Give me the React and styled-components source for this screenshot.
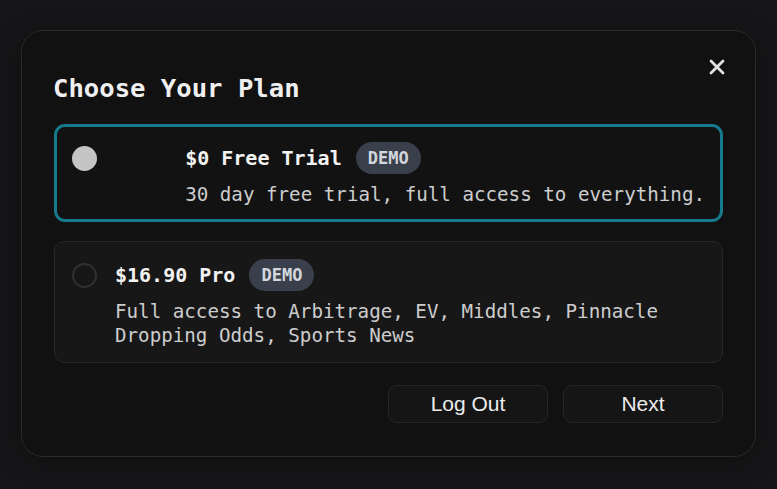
import styled, { createGlobalStyle } from "styled-components";
import { useState } from "react";

const plans = [
  {
    id: "trial",
    title: "$0 Free Trial",
    description: "30 day free trial, full access to everything.",
  },
  {
    id: "pro",
    title: "$16.90 Pro",
    description:
      "Full access to Arbitrage, EV, Middles, Pinnacle Dropping Odds, Sports News",
  },
];

const App = () => {
  const [selected, setSelected] = useState("trial");

  return (
    <>
      <GlobalStyle />
      <Overlay>
        <Modal>
          <Close aria-label="Close">
            <svg width="16" height="16" viewBox="0 0 16 16">
              <path
                d="M2 2 L14 14 M14 2 L2 14"
                stroke="currentColor"
                strokeWidth="2.8"
                strokeLinecap="round"
              />
            </svg>
          </Close>
          <Title>Choose Your Plan</Title>
          <PlanList>
            {plans.map((plan) => {
              const active = plan.id === selected;
              return (
                <PlanCard
                  key={plan.id}
                  $active={active}
                  onClick={() => setSelected(plan.id)}
                >
                  <Radio $active={active} />
                  <PlanText>
                    <PlanHeader>
                      <PlanName>{plan.title}</PlanName>
                      <Badge>DEMO</Badge>
                    </PlanHeader>
                    <PlanDescription>{plan.description}</PlanDescription>
                  </PlanText>
                </PlanCard>
              );
            })}
          </PlanList>
          <Actions>
            <Button>Log Out</Button>
            <Button>Next</Button>
          </Actions>
        </Modal>
      </Overlay>
    </>
  );
};

export default App;

const GlobalStyle = createGlobalStyle`
  * {
    box-sizing: border-box;
  }

  body {
    margin: 0;
    background: #161618;
    font-family: "DejaVu Sans Mono", "Liberation Mono", monospace;
  }
`;

const Overlay = styled.div`
  width: 100vw;
  height: 100vh;
  display: flex;
  align-items: center;
  justify-content: center;
  background: #161618;
`;

const Modal = styled.div`
  position: relative;
  width: 735px;
  padding: 32px 32px 33px;
  background: #111112;
  border: 1px solid #2a2a2c;
  border-radius: 22px;
  box-shadow: 0 4px 24px rgba(0, 0, 0, 0.35);
  margin-top: -2px;
`;

const Close = styled.button`
  position: absolute;
  top: 24px;
  right: 26px;
  width: 24px;
  height: 24px;
  display: flex;
  align-items: center;
  justify-content: center;
  padding: 0;
  border: none;
  background: none;
  color: #e2e2e2;
  cursor: pointer;
`;

const Title = styled.h2`
  margin: 6px 0 17px -1px;
  font-size: 25.6px;
  line-height: 38px;
  font-weight: 700;
  color: #efefef;
`;

const PlanList = styled.div`
  display: flex;
  flex-direction: column;
  gap: 19px;
`;

const PlanCard = styled.div`
  display: flex;
  justify-content: space-between;
  align-items: flex-start;
  gap: 18px;
  padding: ${(props) => (props.$active ? "15px 15px 12px" : "17px 17px 14px")};
  border: ${(props) =>
    props.$active ? "3px solid #157a8b" : "1px solid #262628"};
  border-radius: ${(props) => (props.$active ? "11px" : "10px")};
  background: ${(props) => (props.$active ? "#121213" : "#171718")};
  cursor: pointer;
`;

const Radio = styled.span`
  flex-shrink: 0;
  width: 25px;
  height: 25px;
  margin-top: 4px;
  border-radius: 50%;
  background: ${(props) => (props.$active ? "#c4c4c4" : "transparent")};
  border: ${(props) => (props.$active ? "none" : "2px solid #303032")};
`;

const PlanText = styled.div`
  display: flex;
  flex-direction: column;
  gap: 9px;
`;

const PlanHeader = styled.div`
  display: flex;
  align-items: center;
  gap: 14px;
  height: 32px;
`;

const PlanName = styled.span`
  font-size: 20px;
  font-weight: 700;
  color: #f2f2f2;
`;

const Badge = styled.span`
  display: inline-flex;
  align-items: center;
  height: 32px;
  padding: 0 12px;
  border-radius: 16px;
  background: #3a404b;
  color: #d3d7de;
  font-size: 17px;
  font-weight: 700;
`;

const PlanDescription = styled.p`
  margin: 0;
  font-size: 19.2px;
  line-height: 24px;
  color: #cdcdcd;
`;

const Actions = styled.div`
  display: flex;
  justify-content: flex-end;
  gap: 15px;
  margin-top: 22px;
`;

const Button = styled.button`
  width: 160px;
  height: 38px;
  border: 1px solid #262628;
  border-radius: 9px;
  background: #151516;
  color: #ececec;
  font-family: "Liberation Sans", Arial, sans-serif;
  font-size: 21px;
  cursor: pointer;

  &:hover {
    background: #1c1c1e;
  }
`;
